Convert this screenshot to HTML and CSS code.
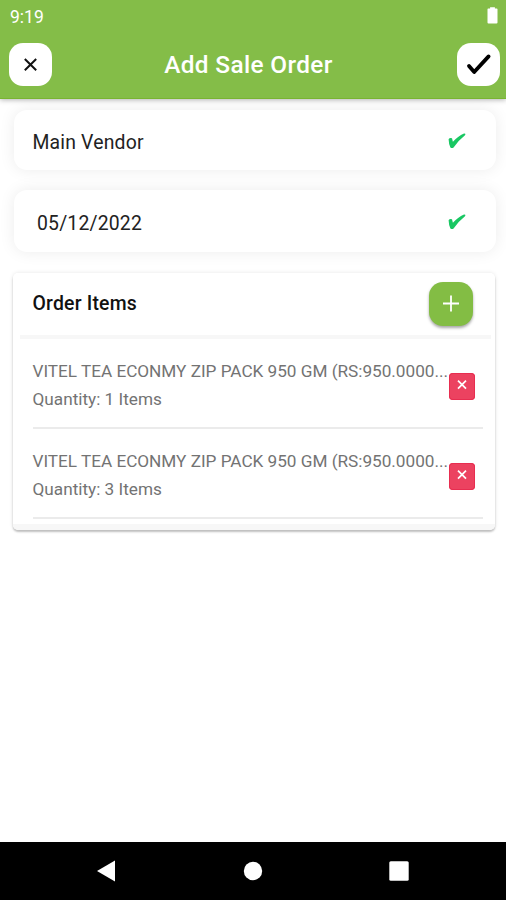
FILE: index.html
```html
<!DOCTYPE html>
<html lang="en">
<head>
<meta charset="utf-8">
<title>Add Sale Order</title>
<link rel="stylesheet" href="styles.css">
</head>
<body>
<div class="screen">
  <header class="header">
    <div class="status">
      <span class="time">9:19</span>
      <svg class="battery" width="11" height="17" viewBox="0 0 10 17"><path d="M0 2.2Q0 1.6 .8 1.6H2.6V.2H7.4V1.6H9.2Q10 1.6 10 2.2V15.6Q10 16.5 9 16.5H1Q0 16.5 0 15.6Z" fill="#fff"/></svg>
    </div>
    <div class="toolbar">
      <button class="tool" aria-label="Close"><svg width="44" height="44" viewBox="0 0 44 44"><path d="M15.8 16L27.2 27.2M27.2 16L15.8 27.2" stroke="#111" stroke-width="2" fill="none"/></svg></button>
      <h1 class="title"><span>Add Sale Order</span></h1>
      <button class="tool" aria-label="Save"><svg width="44" height="44" viewBox="0 0 44 44"><path d="M12 23L17.2 29L31.6 13.4" stroke="#000" stroke-width="3.8" stroke-linecap="round" stroke-linejoin="round" fill="none"/></svg></button>
    </div>
  </header>
  <main class="content">
    <div class="field vendor"><span class="value">Main Vendor</span><svg class="valid" width="18" height="16" viewBox="0 0 18 16"><path d="M.6 6.2Q1.8 4.2 4 5.3L4.9 8.8Q9.8 3 16 .4Q18.2.2 17 2.2Q10.8 7 5.8 14.2Q4.2 15.9 2.4 14.4Q.7 10.8.6 6.2Z" fill="#19c763"/></svg></div>
    <div class="field date"><span class="value">05/12/2022</span><svg class="valid" width="18" height="16" viewBox="0 0 18 16"><path d="M.6 6.2Q1.8 4.2 4 5.3L4.9 8.8Q9.8 3 16 .4Q18.2.2 17 2.2Q10.8 7 5.8 14.2Q4.2 15.9 2.4 14.4Q.7 10.8.6 6.2Z" fill="#19c763"/></svg></div>
    <section class="orders">
      <div class="orders-head">
        <h2 class="heading"><span>Order Items</span></h2>
        <button class="add" aria-label="Add item"><svg width="44" height="44" viewBox="0 0 44 44"><path d="M22 13.5V29.5M14 21.5H30" stroke="#fff" stroke-width="1.8"/></svg></button>
      </div>
      <div class="item">
        <div class="info"><p class="name">VITEL TEA ECONMY ZIP PACK 950 GM (RS:950.0000...</p><p class="qty">Quantity: 1 Items</p></div>
        <button class="remove" aria-label="Remove"><svg width="26" height="27" viewBox="0 0 26 27"><path d="M9 7.6L17 15.6M17 7.6L9 15.6" stroke="#fff" stroke-width="1.7"/></svg></button>
      </div>
      <div class="item">
        <div class="info"><p class="name">VITEL TEA ECONMY ZIP PACK 950 GM (RS:950.0000...</p><p class="qty">Quantity: 3 Items</p></div>
        <button class="remove" aria-label="Remove"><svg width="26" height="27" viewBox="0 0 26 27"><path d="M9 7.6L17 15.6M17 7.6L9 15.6" stroke="#fff" stroke-width="1.7"/></svg></button>
      </div>
    </section>
  </main>
  <nav class="navbar">
    <svg width="19" height="22" viewBox="0 0 19 22"><path d="M18 .5V21.5L0 11Z" fill="#fff"/></svg>
    <svg width="21" height="20" viewBox="0 0 21 20"><circle cx="11" cy="10" r="9.2" fill="#fff"/></svg>
    <svg width="20" height="20" viewBox="0 0 20 20"><rect x=".3" y=".3" width="19.4" height="19.4" rx="1.5" fill="#fff"/></svg>
  </nav>
</div>
</body>
</html>
```

FILE: styles.css
```css
* { box-sizing: border-box; margin: 0; padding: 0; }
body { font-family: Roboto, sans-serif; background: #fff; }
button { border: 0; display: block; font: inherit; }
svg { display: block; }
.screen { width: 506px; height: 900px; display: flex; flex-direction: column; overflow: hidden; }
.header { height: 99px; flex: none; background: #84bd48; border-bottom: 1px solid #79b432; box-shadow: 0 1px 5px rgba(0,0,0,.3); color: #fff; position: relative; }
.status { height: 43px; padding: 7px 8px 0 10px; display: flex; justify-content: space-between; }
.time { font-size: 17.5px; line-height: 20px; }
.toolbar { display: flex; justify-content: space-between; padding: 0 6px 0 9px; }
.tool { width: 43px; height: 43px; border-radius: 14px; background: #fff; }
.title { font-size: 24.4px; line-height: 44px; font-weight: 500; letter-spacing: .35px; margin-right: 12px; }
.content { flex: 1; padding: 11px 10px 0 14px; }
.field { display: flex; justify-content: space-between; border-radius: 13px; background: #fff; box-shadow: 0 0 16px rgba(0,0,0,.08); }
.vendor { height: 60px; padding: 22px 30px 0 18.5px; margin-bottom: 20px; }
.date { height: 62px; padding: 23px 30px 0 23px; }
.value { font-size: 19.4px; line-height: 22px; letter-spacing: .18px; color: #222; }
.vendor .valid { margin-top: 1px; }
.date .valid { margin-top: 1px; }
.orders { position: relative; width: 482px; height: 257px; margin: 21px 0 0 -1px; border-radius: 5px; background: linear-gradient(#fff 251px, #f7f7f7 251px); box-shadow: 0 2px 2px rgba(0,0,0,.22), 0 0 4px rgba(0,0,0,.1); }
.orders-head { display: flex; justify-content: space-between; height: 66px; margin: 0 4px 0 7px; padding: 9px 18px 0 12.5px; border-bottom: 4px solid #f7f7f7; }
.heading { font-size: 19.4px; line-height: 43px; font-weight: 500; letter-spacing: .2px; color: #111; }
.add { width: 44px; height: 44px; border-radius: 14px; background: #83bd44; box-shadow: 0 2px 3px rgba(0,0,0,.35); }
.item { display: flex; height: 90px; margin: 0 12px 0 19.5px; border-bottom: 2px solid #ebebeb; padding-top: 22px; }
.info { width: 416.5px; color: #737373; font-size: 17.2px; line-height: 20px; white-space: nowrap; }
.name { letter-spacing: -.02px; }
.qty { margin-top: 8px; }
.remove { flex: none; width: 26px; height: 27px; margin-top: 12px; border-radius: 4px; background: #ec4260; box-shadow: inset 0 0 0 1px #e82d50; }
.navbar { height: 58px; flex: none; background: #000; display: flex; justify-content: space-between; align-items: center; padding: 0 97px; }
```
